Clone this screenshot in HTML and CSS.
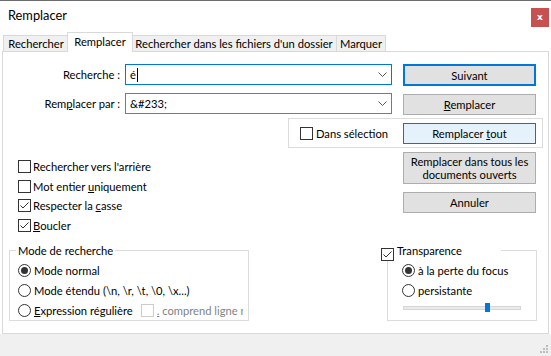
FILE: index.html
```html
<!DOCTYPE html>
<html lang="fr">

<head>
    <meta charset="UTF-8">
    <title>Remplacer</title>
    <link rel="stylesheet" href="styles.css">
</head>

<body>
    <div class="fenetre">
        <div class="titre">
            <span class="titre-texte">Remplacer</span>
            <span class="fermer">x</span>
        </div>

        <nav class="onglets">
            <div class="onglet onglet-chercher">Rechercher</div>
            <div class="onglet onglet-remplacer valgt">Remplacer</div>
            <div class="onglet onglet-dossier">Rechercher dans les fichiers d'un dossier</div>
            <div class="onglet onglet-marquer">Marquer</div>
        </nav>

        <section class="panneau">
            <div class="ligne">
                <label class="etiquette">Recherche :</label>
                <div class="combo focus">
                    <span class="valeur">é<span class="curseur"></span></span>
                    <svg width="9" height="5" viewBox="0 0 9 5">
                        <polyline points="0.5,0.5 4.5,4.5 8.5,0.5" fill="none" stroke="#5a5a5a" />
                    </svg>
                </div>
                <button class="knap defaut">Suivant</button>
            </div>

            <div class="ligne ligne2">
                <label class="etiquette">Rem<u>p</u>lacer par :</label>
                <div class="combo">
                    <span class="valeur">&amp;#233;</span>
                    <svg width="9" height="5" viewBox="0 0 9 5">
                        <polyline points="0.5,0.5 4.5,4.5 8.5,0.5" fill="none" stroke="#5a5a5a" />
                    </svg>
                </div>
                <button class="knap"><u>R</u>emplacer</button>
            </div>

            <div class="selection">
                <label class="case case-sel"><span class="boite"></span><span>Dans sélection</span></label>
                <button class="knap survol">Remplacer <u>t</u>out</button>
            </div>

            <div class="milieu">
                <div class="options">
                    <label class="case"><span class="boite"></span><span>Rechercher vers l'arrière</span></label>
                    <label class="case"><span class="boite"></span><span>Mot entier <u>u</u>niquement</span></label>
                    <label class="case"><span class="boite coche"><svg width="11" height="11" viewBox="0 0 11 11"><polyline points="1.5,5.5 4,8 9.5,2.5" fill="none" stroke="#333" /></svg></span><span>Respecter la <u>c</u>asse</span></label>
                    <label class="case"><span class="boite coche"><svg width="11" height="11" viewBox="0 0 11 11"><polyline points="1.5,5.5 4,8 9.5,2.5" fill="none" stroke="#333" /></svg></span><span><u>B</u>oucler</span></label>
                </div>
                <div class="actions">
                    <button class="knap knap-haut">Remplacer dans tous les<br>documents ouverts</button>
                    <button class="knap annuler">Annuler</button>
                </div>
            </div>

            <div class="bas">
                <div class="groupe groupe-mode">
                    <div class="groupe-titre">Mode de recherche</div>
                    <label class="radio"><span class="rond valgt"></span><span>Mode normal</span></label>
                    <label class="radio"><span class="rond"></span><span>Mode étendu (\n, \r, \t, \0, \x...)</span></label>
                    <label class="radio"><span class="rond"></span><span><u>E</u>xpression régulière</span><span class="boite inactif"></span><span class="texte-inactif"><u>.</u> comprend ligne nouvelle</span></label>
                </div>

                <div class="groupe groupe-transp">
                    <div class="groupe-titre titre-case">
                        <span class="boite coche"><svg width="11" height="11" viewBox="0 0 11 11"><polyline points="1.5,5.5 4,8 9.5,2.5" fill="none" stroke="#333" /></svg></span><span>Transparence</span>
                    </div>
                    <label class="radio"><span class="rond valgt"></span><span>à la perte du focus</span></label>
                    <label class="radio"><span class="rond"></span><span>persistante</span></label>
                    <div class="curseur-glissant">
                        <div class="piste"></div>
                        <div class="pouce"></div>
                    </div>
                </div>
            </div>
        </section>

        <div class="pied">
            <svg width="10" height="10" viewBox="0 0 10 10" class="poignee">
                <rect x="7" y="1" width="2" height="2" fill="#bdbdbd" />
                <rect x="4" y="4" width="2" height="2" fill="#bdbdbd" />
                <rect x="7" y="4" width="2" height="2" fill="#bdbdbd" />
                <rect x="1" y="7" width="2" height="2" fill="#bdbdbd" />
                <rect x="4" y="7" width="2" height="2" fill="#bdbdbd" />
                <rect x="7" y="7" width="2" height="2" fill="#bdbdbd" />
            </svg>
        </div>
    </div>
</body>

</html>
```

FILE: styles.css
```css
* {
    box-sizing: border-box;
    margin: 0;
    padding: 0;
}

body {
    width: 551px;
    height: 356px;
    overflow: hidden;
    background-color: #fff;
    font-family: Lato, "Liberation Sans", sans-serif;
    font-size: 11.2px;
    color: #000;
}

u {
    text-underline-offset: 1px;
}

.fenetre {
    border-top: 1px solid #6b6b6b;
}

/* barre de titre */
.titre {
    height: 29px;
    display: flex;
    justify-content: space-between;
    align-items: flex-start;
}

.titre-texte {
    font-size: 12.8px;
    line-height: 29px;
    margin-left: 8px;
}

.fermer {
    width: 18px;
    height: 19px;
    margin: 7px 2px 0 0;
    background-color: #c75050;
    color: #fff;
    font-family: "DejaVu Sans", sans-serif;
    font-weight: bold;
    font-size: 9px;
    line-height: 18px;
    text-align: center;
}

/* onglets */
.onglets {
    height: 21px;
    display: flex;
    align-items: flex-end;
    padding-left: 3px;
}

.onglet {
    height: 16px;
    line-height: 15px;
    text-align: center;
    background-color: #f0f0f0;
    border: 1px solid #d9d9d9;
    border-bottom: none;
    white-space: nowrap;
}

.onglet-chercher {
    width: 66px;
}

.onglet-remplacer {
    width: 66px;
}

.onglet-dossier {
    width: 206px;
}

.onglet-marquer {
    width: 50px;
    margin-left: -1px;
}

.onglet.valgt {
    position: relative;
    z-index: 1;
    height: 20px;
    margin: 0 -2px -1px -2px;
    background-color: #fff;
    line-height: 18px;
}

/* panneau */
.panneau {
    height: 283px;
    margin: 0 2px 0 2px;
    border: 1px solid #d9d9d9;
    background-color: #fff;
    padding-top: 12px;
}

.ligne {
    display: flex;
    align-items: flex-start;
    height: 22px;
}

.ligne2 {
    margin-top: 7px;
}

.etiquette {
    width: 117px;
    line-height: 21px;
    text-align: right;
    margin-right: 5px;
}

.combo {
    width: 267px;
    height: 21px;
    border: 1px solid #7a7a7a;
    display: flex;
    align-items: center;
    justify-content: space-between;
    padding: 0 4px 0 4px;
    margin-right: 11px;
}

.combo.focus {
    border-color: #0078d7;
}

.valeur {
    display: flex;
    align-items: center;
}

.curseur {
    display: inline-block;
    width: 1px;
    height: 14px;
    background-color: #000;
    margin-left: 1px;
}

.knap {
    width: 133px;
    height: 21px;
    font: inherit;
    color: inherit;
    background-color: #e1e1e1;
    border: 1px solid #adadad;
}

.ligne2 .knap {
    margin-top: 1px;
}

.defaut {
    height: 22px;
    border: 2px solid #0078d7;
}

.survol {
    background-color: #e5f1fb;
    border-color: #0078d7;
}

/* dans selection */
.selection {
    width: 255px;
    height: 30px;
    margin: 3px 0 0 285px;
    border: 1px solid #dcdcdc;
    display: flex;
    align-items: center;
    padding-left: 11px;
}

.case {
    display: flex;
    align-items: center;
    height: 19.5px;
    white-space: nowrap;
}

.case-sel {
    width: 103px;
}

.boite {
    flex: none;
    width: 13px;
    height: 13px;
    border: 1px solid #333;
    background-color: #fff;
    margin-right: 2px;
    display: flex;
    align-items: center;
    justify-content: center;
}

.case-sel .boite {
    margin-right: 3px;
}

/* milieu */
.milieu {
    display: flex;
    align-items: flex-start;
}

.options {
    width: 400px;
    padding-left: 15px;
    margin-top: 9px;
}

.actions {
    width: 133px;
    margin-top: 4px;
}

.knap-haut {
    height: 32px;
    line-height: 13px;
}

.annuler {
    margin-top: 8px;
}

/* groupes du bas */
.bas {
    display: flex;
    margin-top: 15px;
    padding-left: 6px;
}

.groupe {
    height: 71px;
    border: 1px solid #dcdcdc;
}

.groupe-mode {
    width: 240px;
    padding-left: 8px;
}

.groupe-transp {
    width: 150px;
    margin-left: 138px;
    padding-left: 14px;
}

.groupe-titre {
    width: fit-content;
    height: 15px;
    line-height: 15px;
    margin: -8px 0 2px -2px;
    padding: 0 2px;
    background-color: #fff;
}

.titre-case {
    display: flex;
    align-items: flex-start;
    width: 120px;
    margin-left: -21px;
    padding: 0;
}

.titre-case .boite {
    margin: 5px 3px 0 0;
}

.radio {
    display: flex;
    align-items: center;
    height: 20px;
    white-space: nowrap;
}

.rond {
    flex: none;
    width: 13px;
    height: 13px;
    border: 1px solid #333;
    border-radius: 50%;
    margin-right: 3px;
    display: flex;
    align-items: center;
    justify-content: center;
}

.rond.valgt::after {
    content: "";
    width: 7px;
    height: 7px;
    border-radius: 50%;
    background-color: #333;
}

.boite.inactif {
    border-color: #cccccc;
    margin: 0 3px 0 8px;
}

.texte-inactif {
    color: #838383;
    width: 86px;
    overflow: hidden;
}

.curseur-glissant {
    position: relative;
    display: flex;
    align-items: center;
    width: 118px;
    height: 9px;
    margin: 3px 0 0 1px;
}

.piste {
    flex: 1;
    height: 4px;
    background-color: #e7eaea;
    border: 1px solid #d6d6d6;
}

.pouce {
    position: absolute;
    left: 82px;
    top: 0;
    width: 5px;
    height: 9px;
    background-color: #0078d7;
}

/* pied */
.pied {
    height: 22px;
    background-color: #f0f0f0;
    display: flex;
    justify-content: flex-end;
    align-items: flex-end;
}

.poignee {
    margin: 0 2px 2px 0;
}
```
